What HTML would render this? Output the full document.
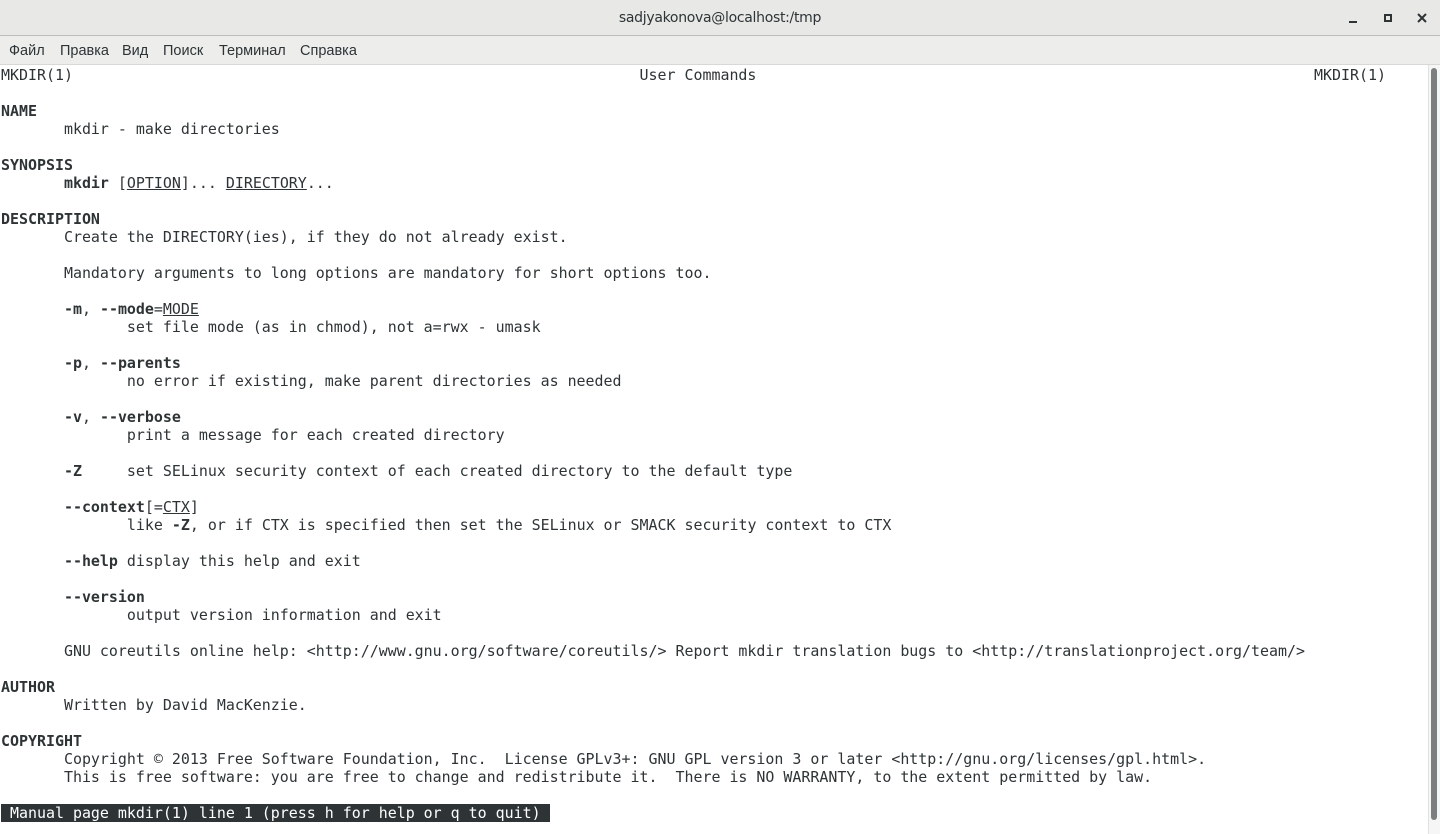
<!DOCTYPE html>
<html><head><meta charset="utf-8"><style>
body{margin:0;width:1440px;height:834px;overflow:hidden;background:#fff;font-family:"Liberation Sans","DejaVu Sans",sans-serif;position:relative}
.title{position:absolute;left:0;top:0;width:1440px;height:35px;background:#e8e8e7;border-bottom:1px solid #bdbdbb;text-align:center;font-size:14px;line-height:37px;color:#2e3436;font-family:"DejaVu Sans",sans-serif;letter-spacing:-0.3px}
.menu{position:absolute;left:0;top:36px;width:1440px;height:28px;background:#ededec;border-bottom:1px solid #d8d8d6;font-size:14.5px;line-height:30px;color:#2e3436;font-family:"Liberation Sans",sans-serif}
.menu span{position:absolute;top:0}
pre{position:absolute;left:1px;top:66px;margin:0;font-family:"DejaVu Sans Mono","Liberation Mono",monospace;font-size:14.95px;line-height:18px;color:#2e3436}
b{font-weight:bold}
u{text-decoration:underline}
.st{background:#2e3436;color:#fff}
.sb{position:absolute;left:1428px;top:65px;width:12px;height:769px;background:#f6f6f6;border-left:1px solid #e0e0e0}
.th{position:absolute;left:1431px;top:68px;width:6px;height:752px;background:#7c7f7f;border-radius:3px}
</style></head><body>
<div class="title">sadjyakonova@localhost:/tmp
<svg style="position:absolute;left:1346px;top:12px" width="14" height="14"><rect x="3" y="9" width="8" height="2" fill="#2e3436"/></svg>
<svg style="position:absolute;left:1381px;top:11px" width="14" height="14"><rect x="4" y="4" width="6" height="6" fill="none" stroke="#2e3436" stroke-width="2"/></svg>
<svg style="position:absolute;left:1415px;top:11px" width="14" height="14"><path d="M3 3L11 11M11 3L3 11" stroke="#2e3436" stroke-width="2"/></svg>
</div>
<div class="menu"><span style="left:9px">Файл</span><span style="left:60px">Правка</span><span style="left:122px">Вид</span><span style="left:163px">Поиск</span><span style="left:219px">Терминал</span><span style="left:300px">Справка</span></div>
<pre>MKDIR(1)                                                               User Commands                                                              MKDIR(1)

<b>NAME</b>
       mkdir - make directories

<b>SYNOPSIS</b>
       <b>mkdir</b> [<u>OPTION</u>]... <u>DIRECTORY</u>...

<b>DESCRIPTION</b>
       Create the DIRECTORY(ies), if they do not already exist.

       Mandatory arguments to long options are mandatory for short options too.

       <b>-m</b>, <b>--mode</b>=<u>MODE</u>
              set file mode (as in chmod), not a=rwx - umask

       <b>-p</b>, <b>--parents</b>
              no error if existing, make parent directories as needed

       <b>-v</b>, <b>--verbose</b>
              print a message for each created directory

       <b>-Z</b>     set SELinux security context of each created directory to the default type

       <b>--context</b>[=<u>CTX</u>]
              like <b>-Z</b>, or if CTX is specified then set the SELinux or SMACK security context to CTX

       <b>--help</b> display this help and exit

       <b>--version</b>
              output version information and exit

       GNU coreutils online help: &lt;http://www.gnu.org/software/coreutils/&gt; Report mkdir translation bugs to &lt;http://translationproject.org/team/&gt;

<b>AUTHOR</b>
       Written by David MacKenzie.

<b>COPYRIGHT</b>
       Copyright © 2013 Free Software Foundation, Inc.  License GPLv3+: GNU GPL version 3 or later &lt;http://gnu.org/licenses/gpl.html&gt;.
       This is free software: you are free to change and redistribute it.  There is NO WARRANTY, to the extent permitted by law.

<span class="st"> Manual page mkdir(1) line 1 (press h for help or q to quit) </span></pre>
<div class="sb"></div><div class="th"></div>
</body></html>
